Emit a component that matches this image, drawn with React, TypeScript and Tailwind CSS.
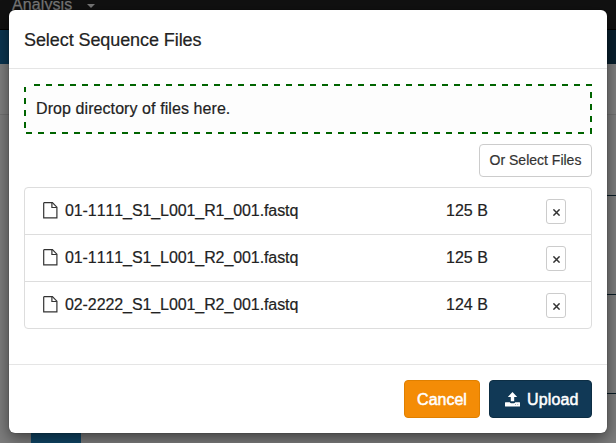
import React from "react";

const files = [
  { name: "01-1111_S1_L001_R1_001.fastq", size: "125 B" },
  { name: "01-1111_S1_L001_R2_001.fastq", size: "125 B" },
  { name: "02-2222_S1_L001_R2_001.fastq", size: "124 B" },
];

function FileIcon() {
  return (
    <svg className="-mt-px h-[17px] w-[15px] shrink-0" viewBox="0 0 15 17" fill="none" stroke="#333" strokeWidth="1.2">
      <path d="M1.2 0.7H9.4L13.9 5.2V15.9H0.7V1.2Q0.7 0.7 1.2 0.7Z" />
      <path d="M8.9 0.8V5.5H13.8" />
    </svg>
  );
}

function UploadIcon() {
  return (
    <svg className="h-[15px] w-[15px] shrink-0" viewBox="0 0 15 15" fill="white">
      <path d="M7.5 0L12.2 5H9.2V9.2H5.8V5H2.8Z" />
      <path fillRule="evenodd" d="M0.5 10.3H4.8Q5.2 11.3 6.2 11.3H8.8Q9.8 11.3 10.2 10.3H14.5Q15 10.3 15 10.8V13.9Q15 14.4 14.5 14.4H0.5Q0 14.4 0 13.9V10.8Q0 10.3 0.5 10.3ZM10 12.4V13.1H10.8V12.4ZM12.4 12.4V13.1H13.2V12.4Z" />
    </svg>
  );
}

function Backdrop() {
  return (
    <div className="flex h-full flex-col">
      <div className="flex h-[30px] shrink-0 items-start border-b border-black bg-[#111] pl-3 text-[#777]">
        <span className="-mt-[6px] w-[60px] whitespace-nowrap text-[16px] leading-[22px] tracking-[0.1px] [-webkit-text-stroke:0.25px_#777]">Analysis</span>
        <span className="ml-[15px] mt-1 border-x-4 border-t-4 border-x-transparent border-t-[#777]" />
      </div>
      <div className="flex h-[34px] shrink-0">
        <div className="w-[300px] bg-[#0b3550]" />
        <div className="flex-1 bg-[#081f2d]" />
      </div>
      <div className="h-[51px] shrink-0 border-b border-[#707070] bg-[#7f7f7f]" />
      <div className="flex flex-1 bg-[#7d7d7d]">
        <div className="flex w-[308px] flex-col justify-end pl-[31px]">
          <div className="h-[30px] w-[50px] bg-[#104666]" />
        </div>
        <div className="flex flex-1 flex-col pt-[80px]">
          <div className="h-[99px] border-t border-[#061923]" />
          <div className="h-[99px] border-t border-[#061923]" />
          <div className="border-t border-[#061923]" />
        </div>
      </div>
    </div>
  );
}

export default function App() {
  return (
    <div className="relative h-[443px] w-[616px] overflow-hidden font-['Liberation_Sans',Arial,sans-serif] text-[#222] [font-kerning:none]">
      <Backdrop />
      <div role="dialog" className="absolute left-[9px] top-[10px] flex h-[423px] w-[598px] flex-col rounded-[6px] bg-white shadow-[0_5px_15px_rgba(0,0,0,0.5),0_0_1px_rgba(0,0,0,0.7)] [-webkit-text-stroke:0.2px_currentColor]">
        <header className="flex h-[59px] shrink-0 items-center border-b border-[#e5e5e5] px-[15px]">
          <h4 className="whitespace-nowrap pt-px text-[18px] leading-6 tracking-[-0.08px]">Select Sequence Files</h4>
        </header>
        <main className="flex flex-1 flex-col px-[15px] pt-[15px]">
          <div className="flex h-[50px] shrink-0 items-center bg-[#fdfdfd] pl-3 [background-image:linear-gradient(#fff,#fff),linear-gradient(#fff,#fff),linear-gradient(90deg,#006400_50%,transparent_50%),linear-gradient(90deg,#006400_50%,transparent_50%),linear-gradient(#006400_50%,transparent_50%),linear-gradient(#006400_50%,transparent_50%)] [background-position:0_0,100%_2px,10px_0,2px_100%,0_2px,100%_8px] [background-repeat:no-repeat,no-repeat,repeat-x,repeat-x,repeat-y,repeat-y] [background-size:10px_3px,2px_6px,12px_2px,12px_2px,2px_12px,2px_12px]">
            <span className="whitespace-nowrap text-[16px] leading-6 tracking-[0.08px]">Drop directory of files here.</span>
          </div>
          <div className="mt-[10px] flex justify-end">
            <button className="flex h-[33px] w-[113px] items-center justify-center whitespace-nowrap rounded-[4px] border border-[#ccc] bg-white text-[14px] text-[#333]">Or Select Files</button>
          </div>
          <ul className="mt-[10px] h-[142px] divide-y divide-[#ddd] rounded-[4px] border border-[#ddd]">
            {files.map((file) => (
              <li key={file.name} className="flex h-[47px] items-center pl-[18px] pr-[25px] last:h-[46px]">
                <FileIcon />
                <span className="ml-[7px] w-[381px] whitespace-nowrap text-[16px] leading-6 tracking-[-0.09px]">{file.name}</span>
                <span className="w-[100px] whitespace-nowrap text-[16px] leading-6">{file.size}</span>
                <button aria-label="Remove" className="mt-px flex h-[25px] w-5 shrink-0 items-center justify-center rounded-[3px] border border-[#ccc] bg-white">
                  <svg className="mt-px h-[7px] w-[7px]" viewBox="0 0 7 7" stroke="#333" strokeWidth="1.5"><path d="M0.4 0.4L6.6 6.6M6.6 0.4L0.4 6.6" /></svg>
                </button>
              </li>
            ))}
          </ul>
        </main>
        <footer className="flex h-[69px] shrink-0 justify-end gap-[9px] border-t border-[#e5e5e5] px-[15px] pt-[15px] text-[16px] text-white">
          <button className="flex h-[38px] w-[76px] items-center justify-center rounded-[4px] border border-[#e08000] bg-[#f48c06] pt-px [-webkit-text-stroke:0.5px_white]">Cancel</button>
          <button className="flex h-[38px] w-[103px] items-center gap-[7px] whitespace-nowrap rounded-[4px] border border-[#0d2e44] bg-[#113956] pl-[15px] pt-px tracking-[0.15px] [-webkit-text-stroke:0.5px_white]"><UploadIcon />Upload</button>
        </footer>
      </div>
    </div>
  );
}
